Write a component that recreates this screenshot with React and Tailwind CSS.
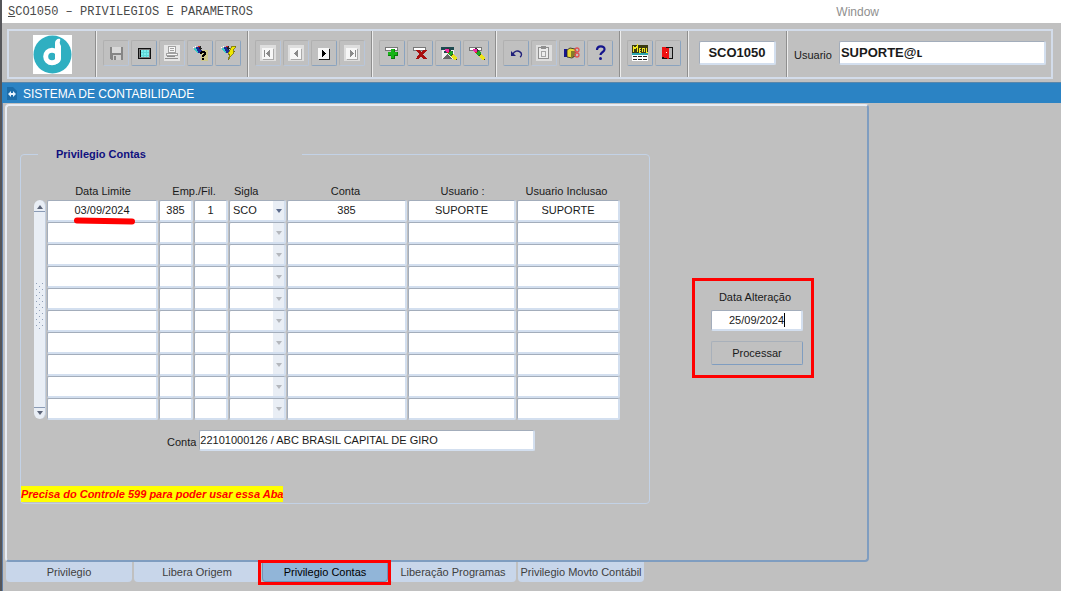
import React from "react";

const rows = [
  ["03/09/2024", "385", "1", "SCO", "385", "SUPORTE", "SUPORTE"],
  ...Array.from({ length: 9 }, () => ["", "", "", "", "", "", ""]),
];

const columns = [
  "Data Limite",
  "Empresa",
  "Filial",
  "Sigla",
  "Conta",
  "Usuario",
  "Usuario Inclusao",
];

const tabs = [
  "Privilegio",
  "Libera Origem",
  "Privilegio Contas",
  "Liberação Programas",
  "Privilegio Movto Contábil",
];

const Icon = ({ children }) => (
  <svg width="20" height="20" viewBox="0 0 20 20" shapeRendering="crispEdges" aria-hidden="true">
    {children}
  </svg>
);

const SaveIcon = () => (
  <Icon>
    <path d="M4 4h13v13H5l-1-1z" fill="#858585" />
    <path d="M6 4h9v6H6z" fill="#d9d9d9" />
    <path d="M7 12h8v5H7z" fill="#cfcfcf" />
    <path d="M8 13h2v4H8z" fill="#858585" />
  </Icon>
);

const ScreenIcon = () => (
  <Icon>
    <rect x="4" y="5" width="13" height="11" rx="1" fill="#111" />
    <rect x="5" y="6" width="11" height="9" fill="#7b7b7b" />
    <rect x="6" y="7" width="9" height="7" fill="#111" />
    <rect x="7" y="7" width="8" height="7" fill="#7af0f0" />
    <path d="M7 9.500h8M7 12.500h8M9.500 7v7M12.500 7v7" stroke="#2ba3a3" strokeWidth="1" opacity=".3" />
  </Icon>
);

const PrintIcon = () => (
  <Icon>
    <path d="M2 2h16v16H2z" fill="#e6e6e6" />
    <path d="M6.500 3.500h7v6h-7z" fill="#f8f8f8" stroke="#a2a2a2" />
    <path d="M8 5.500h4M8 7.500h4" stroke="#a2a2a2" />
    <path d="M4.500 10.500h11v2h-11z" fill="#f8f8f8" stroke="#a2a2a2" />
    <path d="M3 15.500h13M5 13.500h8" stroke="#8f8f8f" />
  </Icon>
);

const Flashlight = () => (
  <>
    <path d="M4 5l4-1 4 3-3 4z" fill="#1c2b9a" />
    <path d="M4 5l3 1 1 4-4-3z" fill="#37c8c8" />
    <path d="M8 3h3l1 3-2 1z" fill="#222" />
    <path d="M8 3h2v1H8z" fill="#e02020" />
    <path d="M3 4h1v1H3zM5 3h1v1H5z" fill="#fff" />
  </>
);

const EnterQueryIcon = () => (
  <Icon>
    <path d="M11 7h7v11h-7z" fill="#d9cf55" opacity=".5" />
    <Flashlight />
    <path
      d="M10 10V9h1V8h4v1h1v3h-1v1h-1v1h-2v-2h1v-1h1v-1h-2v1h-2zM12 15h2v2h-2z"
      fill="#000"
    />
  </Icon>
);

const ExecuteQueryIcon = () => (
  <Icon>
    <Flashlight />
    <path d="M14 3h4l-3 5h2l-7 9 2-6h-2z" fill="#f0e800" stroke="#6b6500" strokeWidth=".7" />
  </Icon>
);

const NavIcon = ({ bar, back, on }) => {
  const ink = on ? "#000" : "#8a8a8a";
  return (
    <Icon>
      {!on && <path d="M2 2h16v16H2z" fill="#dedede" />}
      <path d="M5 6h11v11H5z" fill={on ? "#222" : "#ababab"} />
      <path d="M4 5h11v11H4z" fill="#f7f7f7" />
      <path d={back ? "M12 7v7l-4-3.5z" : "M8 7v7l4-3.5z"} fill={ink} />
      {bar && <path d={back ? "M6 7h1v7H6z" : "M13 7h1v7h-1z"} fill={ink} />}
    </Icon>
  );
};

const Slot = () => (
  <path d="M3.500 4.500h12v3h-12z" fill="#fff" stroke="#777" />
);

const InsertIcon = () => (
  <Icon>
    <Slot />
    <path d="M9 6h4v3h3v4h-3v3H9v-3H6V9h3z" fill="#0a7a0a" />
    <path d="M9 6h3v3h3v3h-3v3H9v-3H6V9h3z" fill="#17b317" />
  </Icon>
);

const DeleteIcon = () => (
  <Icon>
    <Slot />
    <path d="M6 7h4l1 2 2-2h4l-4 4 4 5h-4l-2-3-2 3H6l3-5z" fill="#a80f0f" />
  </Icon>
);

const Pencil = () => (
  <>
    <path d="M7 6l4-1 8 10v2h-3z" fill="#333" />
    <path d="M7 6h4v3H8z" fill="#f02aa8" />
    <path d="M9 9h2v1H9z" fill="#e02020" />
    <path d="M10 10l3-3 2 3-3 3z" fill="#1fa51f" />
    <path d="M13 13l3-2 3 4-2 3z" fill="#ece41a" />
  </>
);

const ClearBlockIcon = () => (
  <Icon>
    <path d="M3 4h13v3H3z" fill="#1e4a50" />
    <path d="M4 7h12v9H4z" fill="#f2f2f2" />
    <path d="M6 8h9v2H6z" fill="#1e4a50" />
    <path d="M5 15l4-4 5 5H5z" fill="#666" />
    <Pencil />
  </Icon>
);

const ClearRecordIcon = () => (
  <Icon>
    <Slot />
    <Pencil />
  </Icon>
);

const UndoIcon = () => (
  <svg width="20" height="20" viewBox="0 0 20 20" aria-hidden="true">
    <path d="M7 11c1-3 5-4 7-2 2 1 2 4 0 5" fill="none" stroke="#20207a" strokeWidth="1.400" />
    <path d="M5 8v5h5z" fill="#20207a" />
  </svg>
);

const ClipboardIcon = () => (
  <Icon>
    <path d="M2 2h16v16H2z" fill="#dedede" />
    <path d="M4.500 4.500h10v11h-10z" fill="#ececec" stroke="#8f8f8f" />
    <path d="M7 3h5v3H7z" fill="#8f8f8f" />
    <path d="M7.500 8.500h4v5h-4z" fill="none" stroke="#a5a5a5" />
  </Icon>
);

const HandIcon = () => (
  <svg width="20" height="20" viewBox="0 0 20 20" aria-hidden="true">
    <path d="M2 6h3v8H2z" fill="#16168c" />
    <path d="M5 7l3-2 5 1 1 2-1 5-3 2-5-1z" fill="#e9d835" stroke="#222" strokeWidth=".8" />
    <path d="M9 9h4M9 11h4M9 13h3" stroke="#222" />
    <circle cx="15" cy="7" r="2" fill="none" stroke="#e05050" strokeWidth="1.300" />
    <circle cx="15" cy="12" r="2" fill="none" stroke="#e05050" strokeWidth="1.300" />
  </svg>
);

const HelpIcon = () => (
  <svg width="20" height="20" viewBox="0 0 20 20" aria-hidden="true">
    <path d="M7 7c0-5 8-4.500 7.500-.5 0 2.500-4 2.500-4 5.500" fill="none" stroke="#14148c" strokeWidth="2.200" />
    <circle cx="10.500" cy="15.500" r="1.500" fill="#14148c" />
  </svg>
);

const MenuIcon = () => (
  <Icon>
    <path d="M2 2h16v8H2z" fill="#3a3a10" />
    <path
      d="M3 9V3l2 3 2-3v6M9 5h2M9 7h2M9 9h2M9 5v4M12 9V5h2v4M16 5v4h2"
      fill="none"
      stroke="#f2ea20"
    />
    <path d="M2 10h16v2H2z" fill="#2aa7b0" />
    <path d="M2 12h16v6H2z" fill="#fff" />
    <path d="M3 13.500h14M3 16.500h14" stroke="#222" strokeDasharray="4 1" />
  </Icon>
);

const ExitIcon = () => (
  <Icon>
    <path d="M4 4h11v12H4z" fill="#111" />
    <path d="M10 5h4v10h-4z" fill="#b5b5b5" />
    <path d="M4 4l7 1v11l-7-2z" fill="#ee1111" />
    <path d="M8 9h1v1H8z" fill="#fff" />
  </Icon>
);

const toolGroups = [
  [
    ["Salvar", <SaveIcon />, false],
    ["Tela", <ScreenIcon />, true],
    ["Imprimir", <PrintIcon />, false],
    ["Entrar consulta", <EnterQueryIcon />, true],
    ["Executar consulta", <ExecuteQueryIcon />, true],
  ],
  [
    ["Primeiro registro", <NavIcon bar back />, false],
    ["Registro anterior", <NavIcon back />, false],
    ["Proximo registro", <NavIcon on />, true],
    ["Ultimo registro", <NavIcon bar />, false],
  ],
  [
    ["Inserir registro", <InsertIcon />, true],
    ["Excluir registro", <DeleteIcon />, true],
    ["Limpar bloco", <ClearBlockIcon />, true],
    ["Limpar registro", <ClearRecordIcon />, true],
  ],
  [
    ["Desfazer", <UndoIcon />, true],
    ["Colar", <ClipboardIcon />, false],
    ["Lista de valores", <HandIcon />, true],
    ["Ajuda", <HelpIcon />, true],
  ],
  [
    ["Menu", <MenuIcon />, true],
    ["Sair", <ExitIcon />, true],
  ],
];

const ToolButton = ({ label, icon, enabled }) => (
  <button
    aria-label={label}
    disabled={!enabled}
    className={
      enabled
        ? "flex h-[26px] w-[26px] items-center justify-center rounded-xs border border-t-[#b0b0b0] border-r-[#8aa3bf] border-b-[#8aa3bf] border-l-[#b0b0b0]"
        : "flex h-[26px] w-[26px] items-center justify-center rounded-xs border border-t-[#b0b0b0] border-r-[#b8c6da] border-b-[#b8c6da] border-l-[#b0b0b0]"
    }
  >
    {icon}
  </button>
);

const Logo = () => (
  <svg width="39" height="39" viewBox="0 0 39 39" aria-label="Logo">
    <path d="M0 0h39v39H0z" fill="#fff" />
    <circle cx="19.500" cy="19.500" r="19" fill="#2fafc1" />
    <circle cx="19" cy="21.500" r="6.300" fill="none" stroke="#fff" strokeWidth="5" />
    <path d="M22 8c0-3 3-5 5-4 1 1-1 3 0 5l1 2v12c0 4-3 6-6 6z" fill="#fff" />
  </svg>
);

const Arrow = ({ up, color }) => (
  <svg width="6" height="4" viewBox="0 0 6 4" aria-hidden="true">
    <path d={up ? "M0 4h6L3 0z" : "M0 0h6L3 4z"} fill={color} />
  </svg>
);

const Scrollbar = () => (
  <div className="mt-[18px] mr-px mb-px flex w-3 flex-col rounded-full border-r border-[#c3cfdf] bg-[#e9eef5]">
    <button aria-label="Rolar para cima" className="flex h-3 items-center justify-center border-b border-[#8a9bb5] pt-[2px]">
      <Arrow up color="#5b6478" />
    </button>
    <div className="flex flex-1 items-center justify-center pb-2">
      <svg width="8" height="48" aria-hidden="true">
        <pattern id="grip" width="8" height="6" patternUnits="userSpaceOnUse">
          <path d="M0 1h1v1H0zM3 4h1v1H3zM6 1h1v1H6z" fill="#8f9fb8" />
        </pattern>
        <rect width="8" height="48" fill="url(#grip)" />
      </svg>
    </div>
    <button aria-label="Rolar para baixo" className="flex h-3 items-center justify-center border-t border-[#8a9bb5] pb-[2px]">
      <Arrow color="#5b6478" />
    </button>
  </div>
);

const field =
  "rounded-xs border border-t-[#a3adbb] border-l-[#a3adbb] border-r-2 border-b-2 border-r-[#d3dfef] border-b-[#d3dfef] bg-white outline-none";

const GridCell = ({ row, col, value }) => {
  if (col === 3) {
    return (
      <div className="relative">
        <select
          aria-label={`${columns[col]} ${row + 1}`}
          defaultValue={value}
          className={`${field} block h-[22px] w-full appearance-none pb-[2px] pl-[3px]`}
        >
          <option>{value}</option>
        </select>
        <span className="pointer-events-none absolute top-px right-[2px] bottom-[2px] flex w-[11px] items-center justify-center bg-[#e9eef5]">
          <Arrow color={value ? "#5b6b8c" : "#b3b7bd"} />
        </span>
      </div>
    );
  }
  return (
    <input
      aria-label={`${columns[col]} ${row + 1}`}
      defaultValue={value}
      className={`${field} block h-[22px] w-full pb-[2px] text-center`}
    />
  );
};

const PrivilegeTable = () => (
  <table className="w-[573px] table-fixed border-separate border-spacing-0">
    <colgroup>
      <col className="w-[112px]" />
      <col className="w-[35px]" />
      <col className="w-[35px]" />
      <col className="w-[58px]" />
      <col className="w-[121px]" />
      <col className="w-[109px]" />
      <col className="w-[103px]" />
    </colgroup>
    <thead>
      <tr className="h-[18px]">
        <th className="p-0 font-normal">Data Limite</th>
        <th className="p-0 font-normal" colSpan={2}>Emp./Fil.</th>
        <th className="p-0 pl-[5px] text-left font-normal">Sigla</th>
        <th className="p-0 pr-1 font-normal">Conta</th>
        <th className="p-0 font-normal">Usuario :</th>
        <th className="p-0 pr-1 font-normal">Usuario Inclusao</th>
      </tr>
    </thead>
    <tbody>
      {rows.map((cells, row) => (
        <tr key={row}>
          {cells.map((value, col) => (
            <td key={col} className="relative p-0 pr-px last:pr-0">
              <GridCell row={row} col={col} value={value} />
              {/* Red marker under the limit date */}
              {row === 0 && col === 0 && (
                <svg className="absolute top-[17px] left-[26px] z-10" width="64" height="8" aria-hidden="true">
                  <path d="M4 3.500L59 4.500" stroke="#ff0000" strokeWidth="6" strokeLinecap="round" />
                </svg>
              )}
            </td>
          ))}
        </tr>
      ))}
    </tbody>
  </table>
);

const App = () => {
  return (
    <div className="flex min-h-screen flex-col border-l-2 border-[#55565a] bg-white pr-1 font-['Liberation_Sans',Arial,sans-serif] text-[11px] leading-4 text-[#1a1a1a]">
      {/* Window title */}
      <header className="flex h-[23px] items-center pl-1.5">
        <h1 className="font-['Liberation_Mono',monospace] text-[12px] text-[#4a4a4a]">
          <span className="underline">S</span>CO1050 – PRIVILEGIOS E PARAMETROS
        </h1>
        <button className="mr-[182px] ml-auto text-[12px] text-[#8f8f8f]">Window</button>
      </header>

      <div className="flex flex-1 flex-col bg-[#c0c0c0]">
        {/* Toolbar */}
        <div className="mt-1.5 mr-2 mb-[3px] ml-[5px] flex h-[50px] border-2 border-[#d3dcea]">
          <div className="flex w-[87px] items-center justify-center border-r border-[#8f8f8f]">
            <Logo />
          </div>
          {toolGroups.map((group, i) => (
            <div
              key={i}
              className="flex items-center gap-[2px] border-r border-l border-r-[#8f8f8f] border-l-[#ededed] px-[6px] pb-[3px]"
            >
              {group.map(([label, icon, enabled]) => (
                <ToolButton key={label} label={label} icon={icon} enabled={enabled} />
              ))}
            </div>
          ))}
          <div className="flex items-center border-r border-l border-r-[#8f8f8f] border-l-[#ededed] px-2.5 pb-[2px]">
            <input
              aria-label="Programa"
              defaultValue="SCO1050"
              className={`${field} h-6 w-[77px] text-center text-[13px] font-bold`}
            />
          </div>
          <div className="flex flex-1 items-center gap-[7px] border-l border-[#ededed] pr-[5px] pb-[2px] pl-1.5">
            <label htmlFor="usuario" className="pt-1">Usuario</label>
            <input
              id="usuario"
              defaultValue="SUPORTE@ʟ"
              className={`${field} h-6 min-w-0 flex-1 pl-px text-[13px] font-bold`}
            />
          </div>
        </div>

        {/* System bar */}
        <div className="flex h-[21px] items-center gap-1.5 border-t border-[#5a87ab] bg-[#2b83c4] pt-[2px] pl-[5px] text-[12px] text-white">
          <svg width="10" height="14" viewBox="0 0 10 14" aria-hidden="true">
            <path d="M0 0h6l4 4v9H0z" fill="#1c6ca9" />
            <path d="M1 7l3-3v6zM9 7L6 4v6z" fill="#e8f4ff" />
            <path d="M3 6h4v2H3z" fill="#e8f4ff" />
          </svg>
          <h2>SISTEMA DE CONTABILIDADE</h2>
        </div>

        {/* Canvas */}
        <div className="flex flex-1 flex-col border-l border-[#5f7fa8] pt-px pb-[9px] pl-[2px]">
          <main className="mr-48 flex flex-1 items-start rounded-sm border-2 border-t-[#e8edf5] border-r-[#7f9dc0] border-b-[#7f9dc0] border-l-[#e8edf5] pt-10 pl-[13px]">
            <fieldset className="w-[630px] rounded-sm border border-[#c3d2e6] pb-px">
              <legend className="ml-[17px] w-[264px] pl-[18px] font-bold text-[#10107e]">
                Privilegio Contas
              </legend>
              <div className="flex pt-5 pl-[13px]">
                <Scrollbar />
                <PrivilegeTable />
              </div>
              <div className="mt-2.5 flex items-center gap-[3px] pl-[146px]">
                <label htmlFor="conta" className="pt-[2px]">Conta</label>
                <input
                  id="conta"
                  defaultValue="22101000126 / ABC BRASIL CAPITAL DE GIRO"
                  className={`${field} h-[21px] w-[336px]`}
                />
              </div>
              <p className="mt-[35px] w-fit bg-[#ffff00] font-bold text-[#ff0000] italic">
                Precisa do Controle 599 para poder usar essa Aba
              </p>
            </fieldset>

            {/* Change date */}
            <form className="mt-[132px] ml-[42px] flex h-[100px] w-[122px] flex-col items-center border-3 border-[#ff0000] pt-2 pl-2">
              <label htmlFor="alteracao" className="pr-1">Data Alteração</label>
              <div className="relative mt-[5px]">
                <input
                  id="alteracao"
                  defaultValue="25/09/2024"
                  className={`${field} block h-[21px] w-[92px] text-center`}
                />
                <span className="absolute top-[3px] right-[18px] h-[14px] w-px bg-black" />
              </div>
              <button
                type="button"
                className="mt-2.5 h-6 w-[92px] rounded-xs border border-t-[#a8b0ba] border-r-[#7f9dc0] border-b-[#7f9dc0] border-l-[#a8b0ba]"
              >
                Processar
              </button>
            </form>
          </main>

          {/* Tabs */}
          <nav className="flex gap-[2px] pl-px">
            {tabs.map((tab) =>
              tab === "Privilegio Contas" ? (
                <button
                  key={tab}
                  className="relative h-5 w-[126px] rounded-b-sm border border-t-0 border-[#6f93b8] bg-[#91b5d8] text-black"
                >
                  {tab}
                  <span className="absolute -top-[2px] -right-1 -bottom-1 -left-[5px] border-3 border-[#ff0000]" />
                </button>
              ) : (
                <button key={tab} className="h-5 w-[126px] rounded-b-sm bg-[#c8d6ea] text-[#404040]">
                  {tab}
                </button>
              )
            )}
          </nav>
        </div>
      </div>
    </div>
  );
};

export default App;
